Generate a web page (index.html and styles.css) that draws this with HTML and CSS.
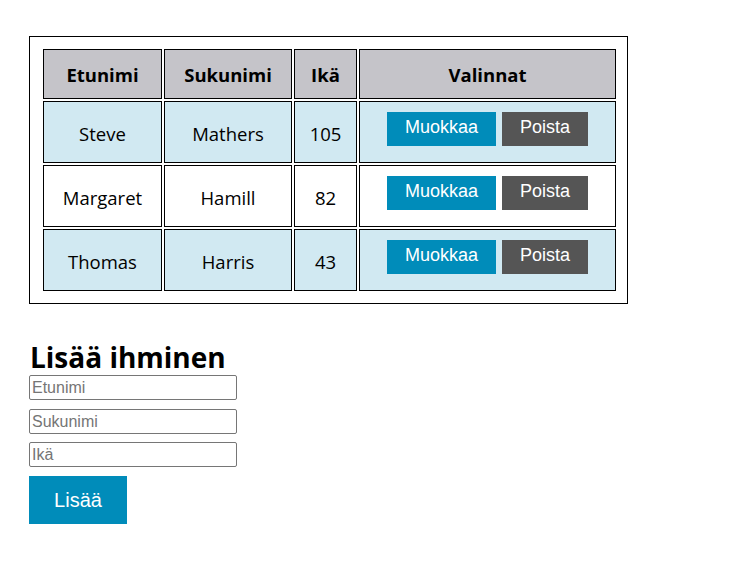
FILE: index.html
```html
<!DOCTYPE html>
<html>
<head>
<meta charset="utf-8">
<link rel="stylesheet" href="styles.css">
</head>
<body>
<div class="page">
  <div class="table-wrap">
    <table class="people">
      <thead>
        <tr>
          <th class="c1">Etunimi</th>
          <th class="c2">Sukunimi</th>
          <th class="c3">Ikä</th>
          <th class="c4">Valinnat</th>
        </tr>
      </thead>
      <tbody>
        <tr class="alt">
          <td>Steve</td><td>Mathers</td><td>105</td>
          <td><div class="actions"><button class="btn edit">Muokkaa</button><button class="btn del">Poista</button></div></td>
        </tr>
        <tr>
          <td>Margaret</td><td>Hamill</td><td>82</td>
          <td><div class="actions"><button class="btn edit">Muokkaa</button><button class="btn del">Poista</button></div></td>
        </tr>
        <tr class="alt">
          <td>Thomas</td><td>Harris</td><td>43</td>
          <td><div class="actions"><button class="btn edit">Muokkaa</button><button class="btn del">Poista</button></div></td>
        </tr>
      </tbody>
    </table>
  </div>
  <h2 class="title">Lisää ihminen</h2>
  <form class="add-form">
    <input class="field" type="text" placeholder="Etunimi">
    <input class="field" type="text" placeholder="Sukunimi">
    <input class="field field-last" type="text" placeholder="Ikä">
    <button class="add-btn" type="button">Lisää</button>
  </form>
</div>
</body>
</html>
```
FILE: styles.css
```css
* { box-sizing: border-box; }
html, body { margin: 0; padding: 0; background: #fff; }
body { font-family: "Open Sans", "Noto Sans", sans-serif; color: #000; }
.page { padding: 36px 0 0 29px; }
.table-wrap {
  width: 599px;
  border: 1px solid #000;
  padding: 10px 9px 10px 11px;
}
.people {
  border-collapse: separate;
  border-spacing: 2px;
  font-size: 18.5px;
}
.people th, .people td {
  border: 1px solid #000;
  text-align: center;
  padding: 0;
}
.people th {
  background: #c5c4c9;
  height: 50px;
  font-weight: 700;
  padding-top: 1px;
}
.people td { height: 62px; padding-top: 2px; }
.people tr.alt td { background: #d1e9f2; }
.c1 { width: 119px; }
.c2 { width: 128px; }
.c3 { width: 63px; }
.c4 { width: 257px; }
.people td .actions {
  display: flex;
  justify-content: center;
  gap: 6px;
  margin-top: -8px;
}
.btn {
  border: none;
  color: #fff;
  font-family: "Liberation Sans", Arial, sans-serif;
  font-size: 18px;
  height: 34px;
  padding: 0 0 3px;
  margin: 0;
}
.edit { background: #008cba; width: 109px; }
.del { background: #555555; width: 86px; }
.title {
  font-size: 28px;
  font-weight: 700;
  margin: 36px 0 0 1px;
  line-height: 35px;
}
.add-form {
  display: flex;
  flex-direction: column;
  align-items: flex-start;
  gap: 9px;
}
.field {
  width: 208px;
  height: 25px;
  border: 1px solid #767676;
  border-radius: 2px;
  padding: 0 2px;
  font-family: "Liberation Sans", Arial, sans-serif;
  font-size: 16px;
}
.field-last { margin-top: -1px; }
.field::placeholder { color: #757575; }
.add-btn {
  width: 98px;
  height: 48px;
  border: none;
  background: #008cba;
  color: #fff;
  font-family: "Liberation Sans", Arial, sans-serif;
  font-size: 20px;
}
```
